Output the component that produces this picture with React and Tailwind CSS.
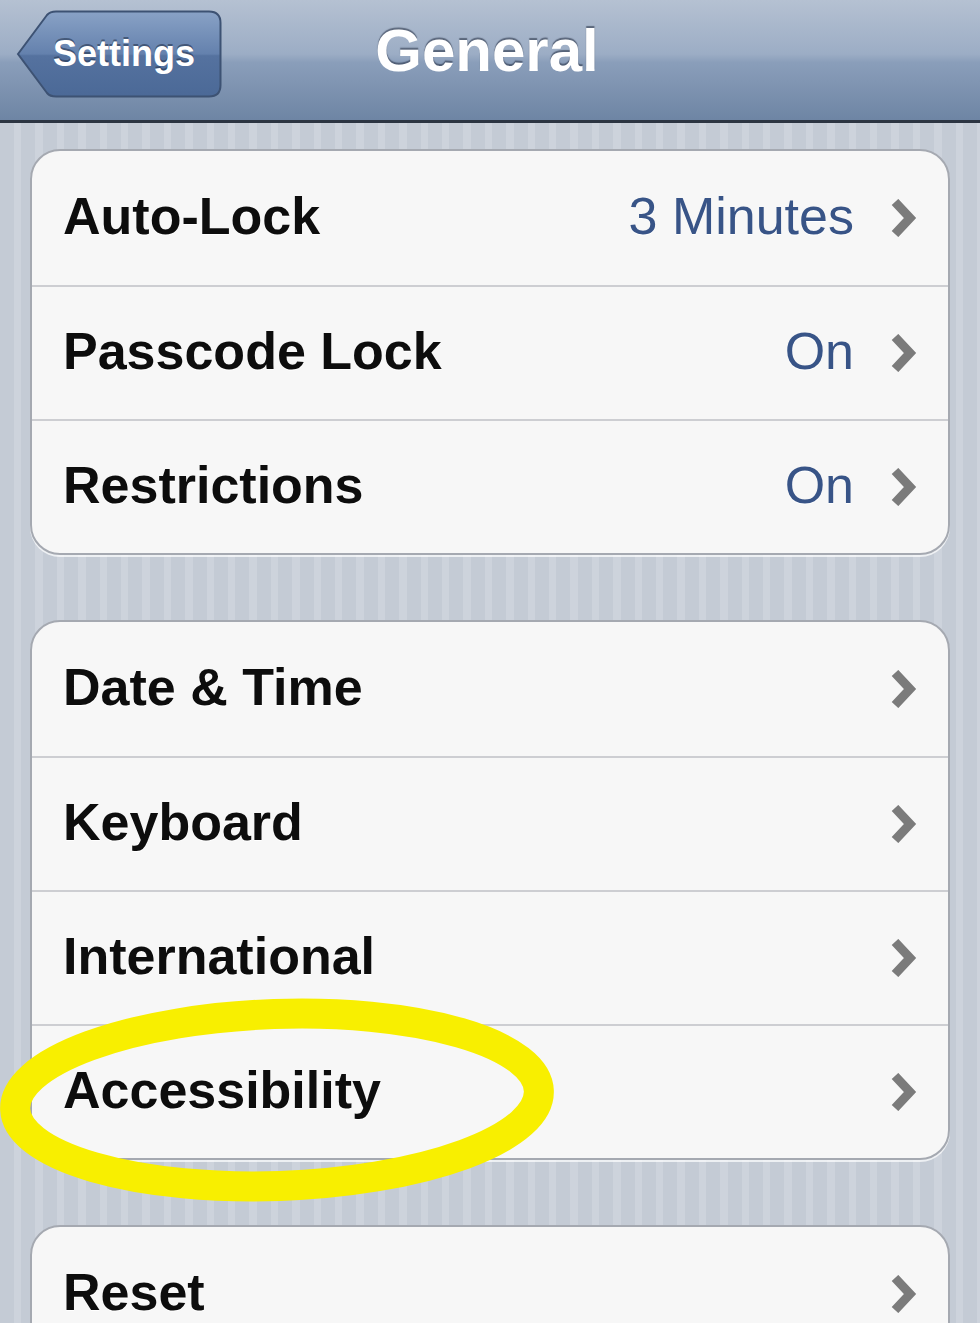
const groups = [
  [
    { label: 'Auto-Lock', value: '3 Minutes' },
    { label: 'Passcode Lock', value: 'On' },
    { label: 'Restrictions', value: 'On' },
  ],
  [
    { label: 'Date & Time' },
    { label: 'Keyboard' },
    { label: 'International' },
    { label: 'Accessibility' },
  ],
  [{ label: 'Reset' }],
];

const Chevron = () => (
  <svg width="26" height="38" viewBox="0 0 26 38" className="shrink-0">
    <polyline points="4,3 19,19 4,35" fill="none" stroke="#7b7b7b" strokeWidth="9" strokeLinejoin="miter" />
  </svg>
);

const BackButton = () => (
  <button className="relative mt-[10px] ml-[16px] flex h-[88px] w-[206px] items-center pl-[37px]">
    <svg className="absolute inset-0" width="206" height="88" viewBox="0 0 206 88">
      <defs>
        <linearGradient id="backFill" x1="0" y1="0" x2="0" y2="1">
          <stop offset="0" stopColor="#89a2c6" />
          <stop offset="0.5" stopColor="#6481ad" />
          <stop offset="0.52" stopColor="#55729f" />
          <stop offset="1" stopColor="#4b6997" />
        </linearGradient>
      </defs>
      <path
        d="M2 44 L31 5 Q34 1.5 40 1.5 H193 Q204.5 1.5 204.5 13 V75 Q204.5 86.5 193 86.5 H40 Q34 86.5 31 83 Z"
        fill="url(#backFill)"
        stroke="#3d5273"
        strokeWidth="2"
      />
    </svg>
    <span className="relative text-[36px] leading-none font-bold text-white [text-shadow:0_-2px_0_rgba(30,45,70,0.55)]">
      Settings
    </span>
  </button>
);

const Row = ({ label, value, first }) => (
  <div className={`flex h-[134px] items-center pr-[31px] pl-[31px] ${first ? '' : 'border-t-2 border-[#cdced2]'}`}>
    <span className="-mt-[4px] flex-1 text-[52px] leading-none font-bold text-[#0d0d0d] [text-shadow:0_1px_0_#fff]">{label}</span>
    {value && <span className="-mt-[4px] mr-[37px] text-[52px] leading-none text-[#385487] [text-shadow:0_1px_0_#fff]">{value}</span>}
    <Chevron />
  </div>
);

export default function App() {
  return (
    <div className="relative h-[1323px] w-[980px] overflow-hidden font-['Liberation_Sans',Arial,sans-serif] bg-[repeating-linear-gradient(90deg,#c4cbd5_0px,#c4cbd5_14px,#cdd3dc_14px,#cdd3dc_21.4px)]">
      {/* Nav bar */}
      <div className="grid h-[123px] grid-cols-[1fr_auto_1fr] border-b-[3px] border-[#2c3542] bg-[linear-gradient(180deg,#b5c1d2_0%,#9cadc5_45%,#8a9eba_52%,#6e85a4_100%)]">
        <div className="flex items-start">
          <BackButton />
        </div>
        <h1 className="mt-[21px] -ml-[6px] text-[60px] leading-[60px] font-bold text-white [text-shadow:0_-2px_1px_rgba(40,50,70,0.6)]">
          General
        </h1>
        <div />
      </div>

      {/* Groups */}
      <div className="flex flex-col gap-[65px] px-[30px] pt-[26px]">
        {groups.map((rows, gi) => (
          <div
            key={gi}
            className="overflow-hidden rounded-[30px] border-2 border-[#a5a9b1] bg-[#f7f7f7] shadow-[0_2px_0_rgba(255,255,255,0.7)]"
          >
            {rows.map((r, i) => (
              <Row key={r.label} label={r.label} value={r.value} first={i === 0} />
            ))}
          </div>
        ))}
      </div>

      {/* Yellow highlight drawn over Accessibility */}
      <svg className="pointer-events-none absolute top-[980px] left-0" width="600" height="240" viewBox="0 980 600 240">
        <ellipse
          cx="277"
          cy="1100"
          rx="262"
          ry="86"
          transform="rotate(-2 277 1100)"
          fill="none"
          stroke="#f8ef00"
          strokeWidth="30"
        />
      </svg>
    </div>
  );
}
